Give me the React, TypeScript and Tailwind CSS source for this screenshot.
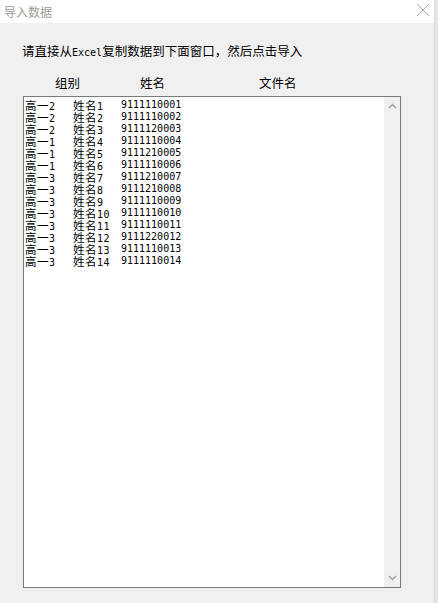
import React from "react";

const rows = [
  ["2", "1", "9111110001"],
  ["2", "2", "9111110002"],
  ["2", "3", "9111120003"],
  ["1", "4", "9111110004"],
  ["1", "5", "9111210005"],
  ["1", "6", "9111110006"],
  ["3", "7", "9111210007"],
  ["3", "8", "9111210008"],
  ["3", "9", "9111110009"],
  ["3", "10", "9111110010"],
  ["3", "11", "9111110011"],
  ["3", "12", "9111220012"],
  ["3", "13", "9111110013"],
  ["3", "14", "9111110014"],
];

const Num = ({ children }: { children: React.ReactNode }) => (
  <span className="font-['DejaVu_Sans_Mono',monospace] text-[10px]">{children}</span>
);

const App = () => {
  return (
    <div className="w-[438px] h-[603px] bg-[#f0f0f0] font-['Noto_Sans_CJK_SC',sans-serif] text-black overflow-hidden flex">
      <div className="w-[435px] flex flex-col border-r border-[#d4dcd4]">
        {/* title bar */}
        <div className="h-[23px] bg-white flex items-center justify-between pl-[4px] pr-[4px]">
          <span className="text-[12px] text-[#9a9a9a] leading-none">导入数据</span>
          <svg width="14" height="14" viewBox="0 0 14 14" className="mb-[4px]">
            <path d="M1 1 L13 13 M13 1 L1 13" stroke="#a8a8a8" strokeWidth="1" fill="none" />
          </svg>
        </div>

        <div className="px-[22px]">
          <p className="pt-[20px] text-[12.5px] leading-[16px] whitespace-nowrap">
            请直接从<Num>Excel</Num>复制数据到下面窗口，然后点击导入
          </p>

          <div className="mt-[14px] flex text-[12.5px] leading-[16px]">
            <span className="ml-[33px] w-[85px]">组别</span>
            <span className="w-[119px]">姓名</span>
            <span>文件名</span>
          </div>

          {/* text area */}
          <div className="mt-[5px] ml-[1px] w-[378px] h-[492px] border border-[#7a7a7a] bg-white flex">
            <div className="flex-1 pl-[1px] pt-[2px] text-[11.5px] leading-[12px]">
              {rows.map(([g, n, id], i) => (
                <div key={i} className="flex h-[12px] whitespace-nowrap">
                  <span className="w-[48px] tracking-[0.5px]">
                    高一<Num>{g}</Num>
                  </span>
                  <span className="w-[48px] tracking-[0.5px]">
                    姓名<Num>{n}</Num>
                  </span>
                  <Num>{id}</Num>
                </div>
              ))}
            </div>
            <div className="w-[16px] bg-[#f0f0f0] flex flex-col justify-between items-center py-[6px]">
              <svg width="9" height="6" viewBox="0 0 9 6">
                <path d="M1 5 L4.5 1.5 L8 5" stroke="#a3a3a3" strokeWidth="1.5" fill="none" />
              </svg>
              <svg width="9" height="6" viewBox="0 0 9 6">
                <path d="M1 1 L4.5 4.5 L8 1" stroke="#a3a3a3" strokeWidth="1.5" fill="none" />
              </svg>
            </div>
          </div>
        </div>
      </div>
      <div className="flex-1 bg-[#e6e6e6]" />
    </div>
  );
};

export default App;
